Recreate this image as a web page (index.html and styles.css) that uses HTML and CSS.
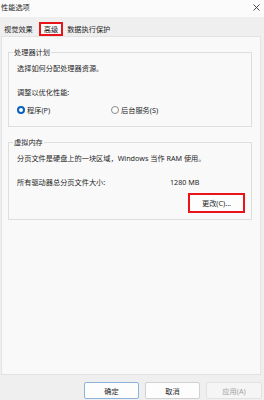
FILE: index.html
```html
<!DOCTYPE html>
<html lang="zh-CN">
<head>
<meta charset="utf-8">
<title>性能选项</title>
<link rel="stylesheet" href="styles.css">
</head>
<body>
<div class="window">
  <div class="titlebar">
    <span class="title">性能选项</span>
    <svg class="close" width="7" height="7" viewBox="0 0 7 7"><path d="M0.5 0.5 L6.5 6.5 M6.5 0.5 L0.5 6.5" stroke="#333" stroke-width="0.9" fill="none"/></svg>
  </div>
  <div class="tabs">
    <span class="tab">视觉效果</span>
    <span class="tab tab-active">高级</span>
    <span class="tab">数据执行保护</span>
  </div>
  <div class="panel">
    <div class="group group-cpu">
      <span class="legend">处理器计划</span>
      <div class="line">选择如何分配处理器资源。</div>
      <div class="line line-gap">调整以优化性能:</div>
      <div class="radios">
        <label class="radio"><span class="dot dot-on"></span>程序(P)</label>
        <label class="radio radio-2"><span class="dot"></span>后台服务(S)</label>
      </div>
    </div>
    <div class="group group-mem">
      <span class="legend">虚拟内存</span>
      <div class="line">分页文件是硬盘上的一块区域，Windows 当作 RAM 使用。</div>
      <div class="line line-gap size-row"><span class="size-label">所有驱动器总分页文件大小:</span><span>1280 MB</span></div>
      <div class="btn-row"><button class="btn-change">更改(C)...</button></div>
    </div>
  </div>
  <div class="footer">
    <button class="btn btn-default">确定</button>
    <button class="btn">取消</button>
    <button class="btn btn-disabled">应用(A)</button>
  </div>
</div>
</body>
</html>
```

FILE: styles.css
```css
* { box-sizing: border-box; }
html, body { margin: 0; padding: 0; }
body {
  width: 264px;
  height: 400px;
  background: #efefef;
  font-family: "Noto Sans", "Noto Sans CJK SC", "Microsoft YaHei", sans-serif;
  font-size: 7.2px;
  color: #1f1f1f;
  overflow: hidden;
}
.window {
  display: flex;
  flex-direction: column;
  height: 400px;
}
.titlebar {
  height: 17px;
  background: #fbfbfb;
  display: flex;
  align-items: flex-start;
  justify-content: space-between;
  padding: 0 4px 0 0;
}
.title {
  line-height: 14px;
  padding-left: 1px;
}
.close { margin-top: 4px; }
.tabs {
  height: 19px;
  display: flex;
  align-items: flex-start;
  padding-top: 5px;
}
.tab {
  height: 14px;
  line-height: 10px;
  border: 2px solid transparent;
  padding: 0 2px;
  white-space: nowrap;
}
.tab-active {
  margin-left: 2px;
  margin-right: 0;
  padding: 0 3px;
  border-color: #e8141a;
  background: #fafafa;
}
.panel {
  height: 339px;
  margin: 0 3px 0 1px;
  background: #f9f9f9;
  border: 1px solid #e3e3e3;
  padding: 15px 8px 0 6px;
}
.group {
  position: relative;
  border: 1px solid #dedede;
  padding: 10px 8px 0 8px;
}
.legend {
  position: absolute;
  top: -6px;
  left: 4px;
  padding: 0 1px;
  line-height: 10px;
  background: #f9f9f9;
}
.group-cpu { height: 75px; }
.group-mem { height: 78px; margin-top: 15px; }
.line {
  line-height: 10px;
  white-space: nowrap;
}
.line-gap { margin-top: 14px; }
.radios {
  display: flex;
  margin-top: 8px;
  line-height: 10px;
}
.radio {
  display: flex;
  align-items: center;
  gap: 2px;
}
.radio-2 { margin-left: 61px; }
.dot {
  width: 8px;
  height: 8px;
  border-radius: 50%;
  border: 1px solid #8a8a8a;
  background: #fdfdfd;
}
.dot-on {
  border: 2.5px solid #0a5fc4;
  background: #ffffff;
}
.size-row { display: flex; }
.size-label { width: 153px; }
.btn-row {
  display: flex;
  justify-content: flex-end;
  margin-top: 6px;
  margin-right: -2px;
}
.btn-change {
  width: 57px;
  height: 20px;
  border: 2px solid #e8141a;
  background: #fdfdfd;
  font: inherit;
  color: #1f1f1f;
  padding: 0;
}
.footer {
  display: flex;
  justify-content: flex-end;
  gap: 6px;
  padding: 7px 2px 0 0;
}
.btn {
  width: 55px;
  height: 17px;
  border: 1px solid #d2d2d2;
  border-radius: 2px;
  background: #fdfdfd;
  font: inherit;
  color: #1f1f1f;
  padding: 0;
}
.btn-default { border-color: #8db3dc; }
.btn-disabled {
  width: 56px;
  color: #a3a3a3;
  background: #f5f5f5;
  border-color: #e2e2e2;
}
```
